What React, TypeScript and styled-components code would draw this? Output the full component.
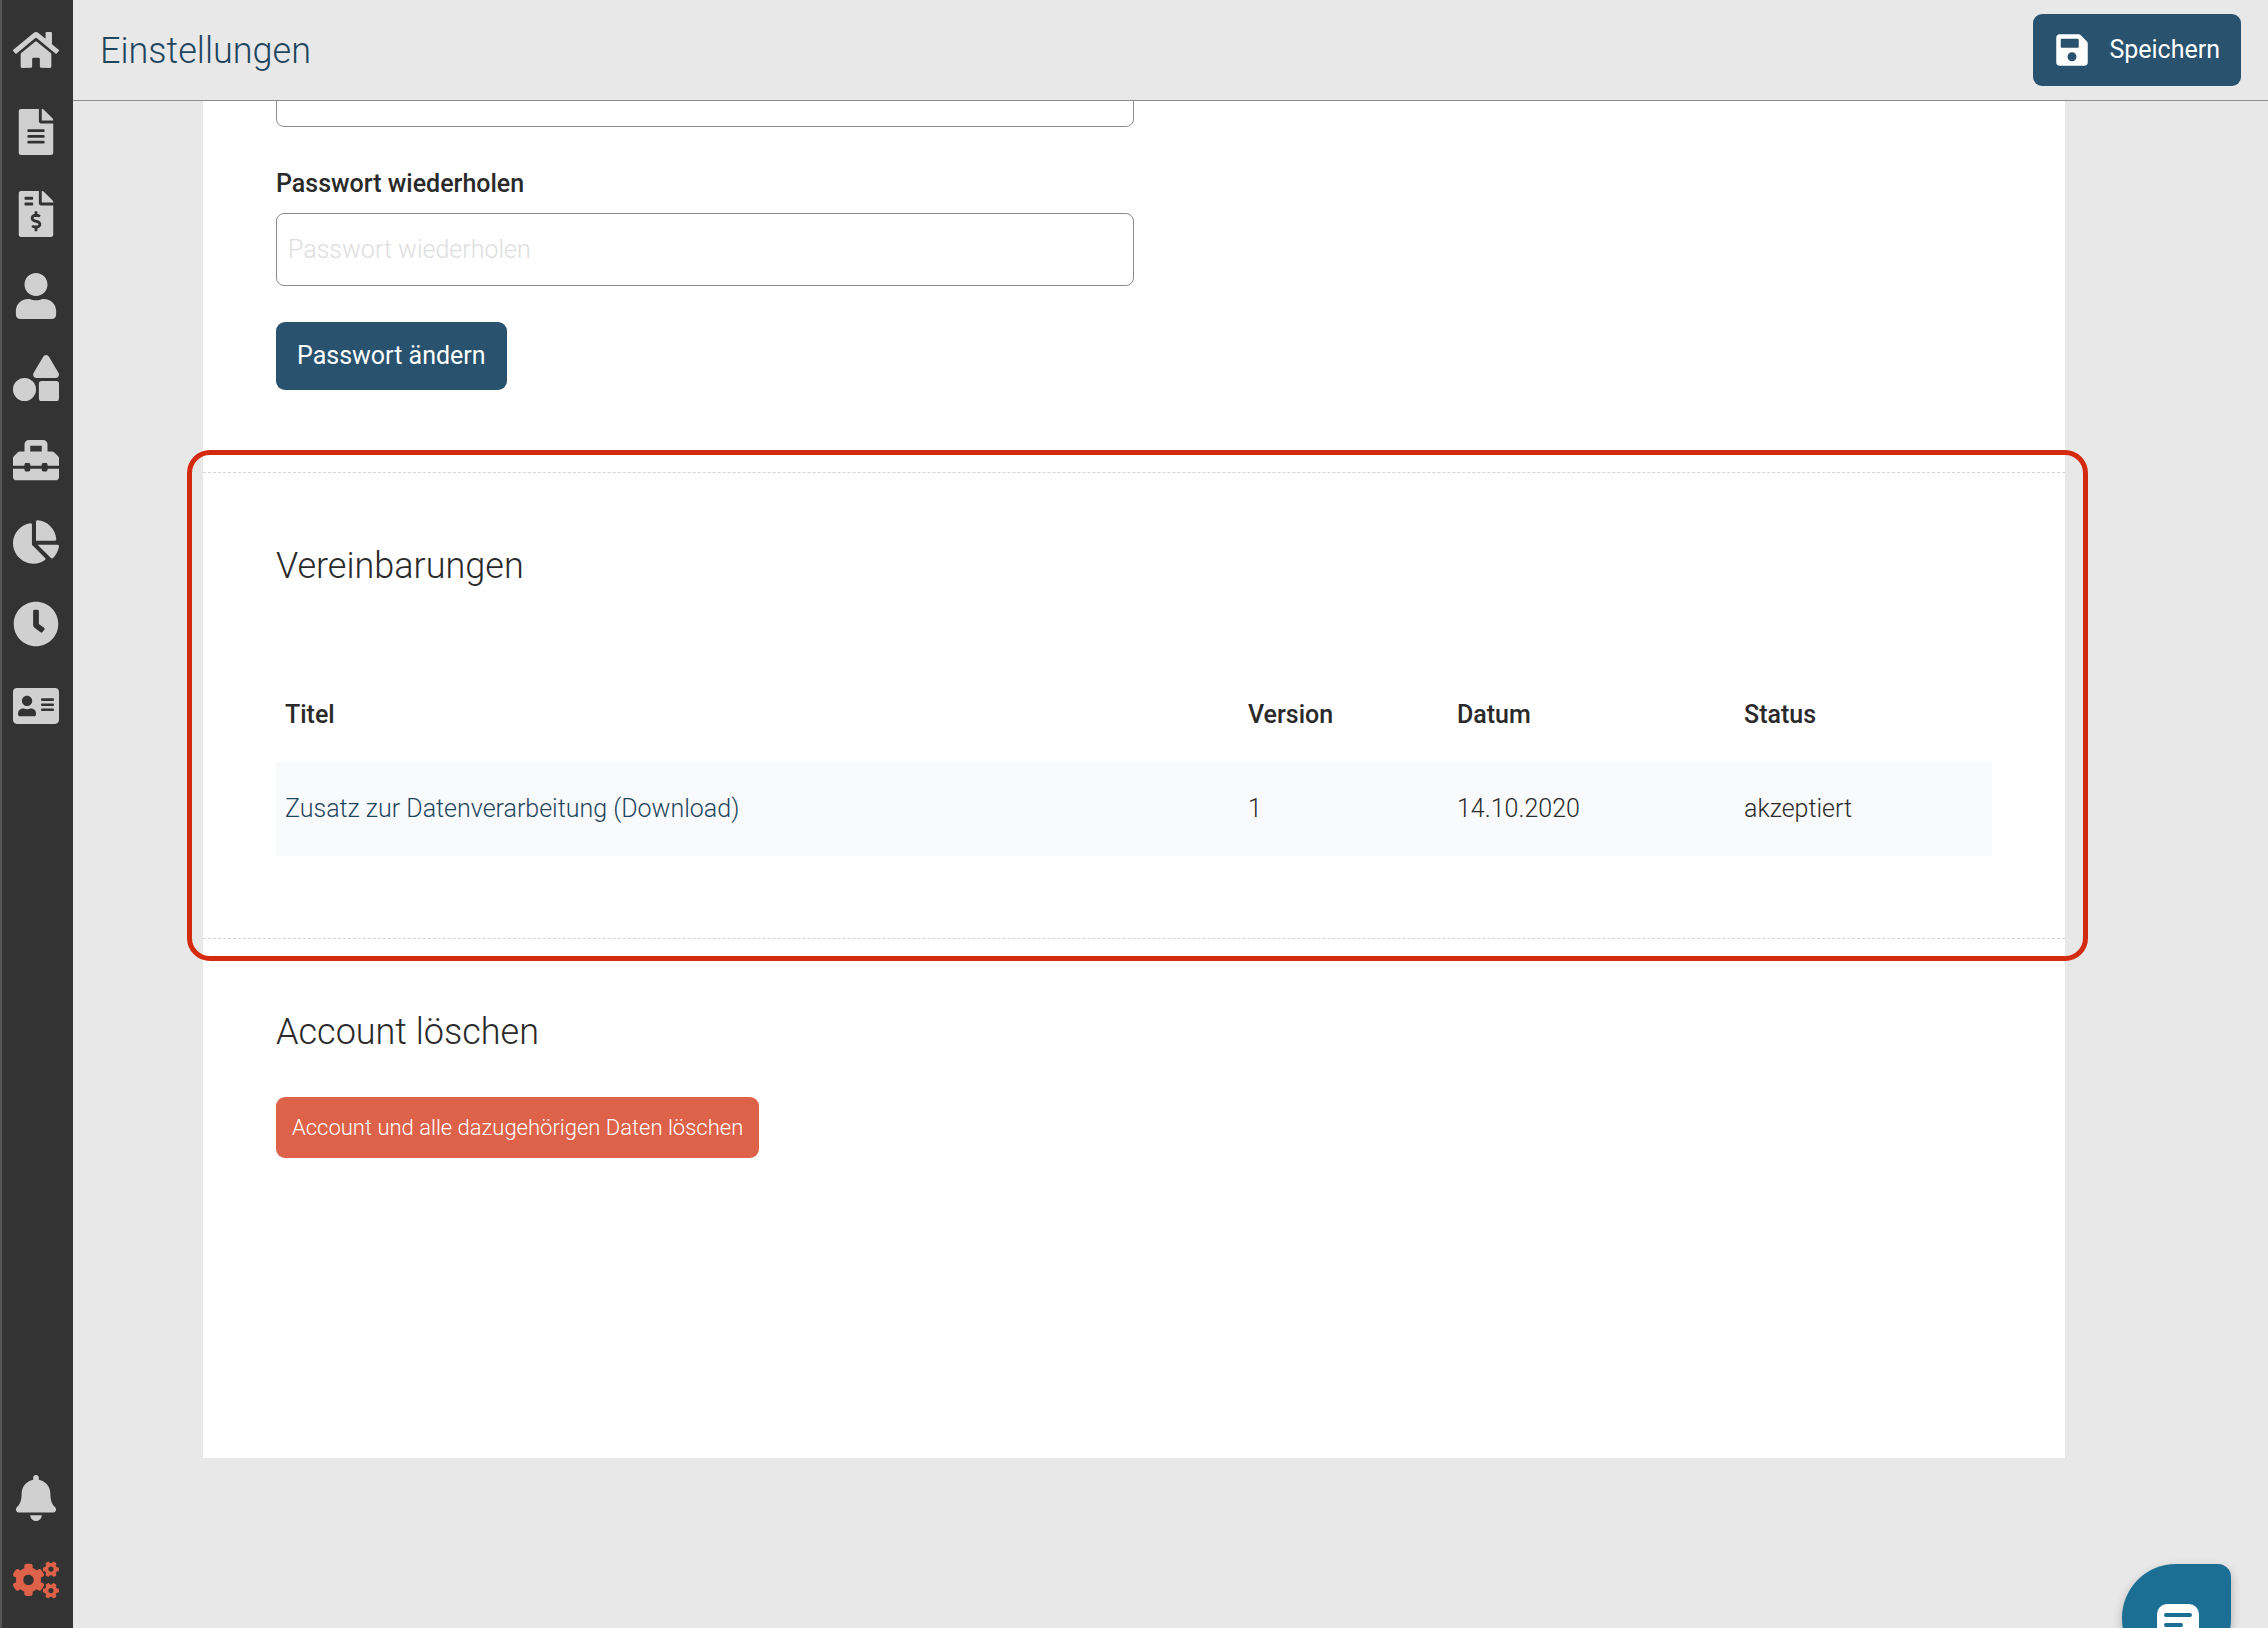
import React from "react";
import styled, { createGlobalStyle, css } from "styled-components";
import {
  FaAddressCard,
  FaBell,
  FaChartPie,
  FaClock,
  FaCogs,
  FaFileAlt,
  FaFileInvoiceDollar,
  FaHome,
  FaSave,
  FaShapes,
  FaToolbox,
  FaUser,
} from "react-icons/fa";

const color = {
  page: "#e8e8e8",
  sidebar: "#333333",
  icon: "#d0d0d0",
  text: "#2a2a2a",
  primary: "#28526d",
  link: "#1f465f",
  danger: "#dd6249",
  line: "#8c8c8c",
  highlight: "#d42a10",
  chat: "#1b6f95",
};

const GlobalStyle = createGlobalStyle`
  *, *::before, *::after { box-sizing: border-box; }
  body {
    margin: 0;
    background: ${color.page};
    color: ${color.text};
    font-family: Roboto, "Liberation Sans", sans-serif;
    font-size: 25px;
    font-weight: 300;
    line-height: 32px;
  }
`;

const Shell = styled.div`
  display: flex;
  height: 100vh;
`;

const Sidebar = styled.nav`
  flex: none;
  display: flex;
  flex-direction: column;
  justify-content: space-between;
  width: 73px;
  padding: 9px 3px 7px 0;
  background: ${color.sidebar};
  border-left: 2px solid #555555;
`;

const NavGroup = styled.div`
  display: flex;
  flex-direction: column;
`;

const NavLink = styled.a<{ $active?: boolean }>`
  display: flex;
  align-items: center;
  justify-content: center;
  height: 82px;
  color: ${(p) => (p.$active ? color.danger : color.icon)};

  svg {
    width: 46px;
    height: 46px;
  }
`;

const Content = styled.div`
  flex: 1;
  min-width: 0;
  display: flex;
  flex-direction: column;
`;

const Header = styled.header`
  flex: none;
  display: flex;
  align-items: center;
  justify-content: space-between;
  height: 101px;
  padding: 0 27px;
  border-bottom: 1px solid ${color.line};
`;

const PageTitle = styled.h1`
  margin: 0;
  padding-top: 2px;
  color: ${color.link};
  font-size: 36px;
  font-weight: 300;
  line-height: 42px;
`;

const Heading = styled.h2`
  margin: 0;
  font-size: 36px;
  font-weight: 300;
  line-height: 42px;
`;

const Button = styled.button<{ $kind?: "save" | "danger" }>`
  display: inline-flex;
  align-items: center;
  gap: 19px;
  height: 68px;
  padding: 0 21px;
  border: 0;
  border-radius: 9px;
  background: ${color.primary};
  color: #ffffff;
  font: inherit;
  font-weight: 400;
  cursor: pointer;

  ${(p) =>
    p.$kind === "save" &&
    css`
      height: 72px;

      svg {
        width: 36px;
        height: 36px;
      }
    `}

  ${(p) =>
    p.$kind === "danger" &&
    css`
      height: 61px;
      padding: 0 16px;
      background: ${color.danger};
      font-size: 22px;
      font-weight: 300;
    `}
`;

const Main = styled.main`
  flex: 1;
  min-height: 0;
  overflow: hidden;
  padding: 0 203px 0 130px;
`;

const Card = styled.div`
  margin-top: -47px;
  padding-bottom: 300px;
  background: #ffffff;
`;

const PasswordForm = styled.form`
  display: flex;
  flex-direction: column;
  align-items: flex-start;
  padding: 0 73px 82px;
`;

const Label = styled.label`
  margin: 41px 0 13px;
  font-weight: 500;
`;

const Input = styled.input`
  width: 50%;
  height: 73px;
  padding: 0 11px;
  border: 1px solid ${color.line};
  border-radius: 8px;
  background: #ffffff;
  color: ${color.text};
  font: inherit;

  &::placeholder {
    color: #dedede;
    opacity: 1;
  }
`;

const FormActions = styled.div`
  display: flex;
  margin-top: 36px;
`;

const Agreements = styled.section`
  position: relative;
  padding: 72px 73px 82px;
  border-top: 1px dashed #d4d4d4;
  border-bottom: 1px dashed #d4d4d4;
`;

const HighlightFrame = styled.div`
  position: absolute;
  inset: -23px -23px -23px -16px;
  border: 5px solid ${color.highlight};
  border-radius: 23px;
  pointer-events: none;
`;

const Table = styled.table`
  width: 100%;
  margin-top: 81px;
  border-collapse: collapse;
  table-layout: fixed;
`;

const HeadCell = styled.th<{ $width?: number }>`
  width: ${(p) => (p.$width ? `${p.$width}px` : "auto")};
  height: 94px;
  padding: 0 9px;
  font-weight: 500;
  text-align: left;
`;

const Cell = styled.td`
  height: 94px;
  padding: 0 9px;
  background: #f9fafc;
`;

const DocumentLink = styled.a`
  color: ${color.link};
  text-decoration: none;
`;

const DeleteSection = styled.section`
  display: flex;
  flex-direction: column;
  align-items: flex-start;
  gap: 44px;
  padding: 72px 73px 0;
`;

const ChatButton = styled.button`
  position: fixed;
  right: 37px;
  bottom: -45px;
  display: flex;
  align-items: flex-start;
  justify-content: center;
  width: 109px;
  height: 109px;
  padding: 40px 0 0 2px;
  border: 0;
  border-radius: 54px 13px 54px 54px;
  background: ${color.chat};
  box-shadow: 0 4px 10px rgba(0, 0, 0, 0.25);
  cursor: pointer;
`;

const ChatIcon = () => (
  <svg width="42" height="42" viewBox="0 0 42 42" aria-hidden="true">
    <path
      d="M10 0H32A10 10 0 0 1 42 10V40L32 34H10A10 10 0 0 1 0 24V10A10 10 0 0 1 10 0Z"
      fill="#ffffff"
    />
    <path d="M9 11H33M9 21H24" stroke={color.chat} strokeWidth="4" strokeLinecap="round" />
  </svg>
);

const mainNav = [
  { name: "Startseite", Icon: FaHome },
  { name: "Dokumente", Icon: FaFileAlt },
  { name: "Rechnungen", Icon: FaFileInvoiceDollar },
  { name: "Kunden", Icon: FaUser },
  { name: "Artikel", Icon: FaShapes },
  { name: "Werkzeuge", Icon: FaToolbox },
  { name: "Auswertungen", Icon: FaChartPie },
  { name: "Zeiterfassung", Icon: FaClock },
  { name: "Kontakte", Icon: FaAddressCard },
];

const agreements = [
  {
    title: "Zusatz zur Datenverarbeitung (Download)",
    version: "1",
    date: "14.10.2020",
    status: "akzeptiert",
  },
];

export default function App() {
  return (
    <>
      <GlobalStyle />
      <Shell>
        <Sidebar>
          <NavGroup>
            {mainNav.map(({ name, Icon }) => (
              <NavLink key={name} href="#" aria-label={name}>
                <Icon />
              </NavLink>
            ))}
          </NavGroup>
          <NavGroup>
            <NavLink href="#" aria-label="Benachrichtigungen">
              <FaBell />
            </NavLink>
            <NavLink href="#" aria-label="Einstellungen" $active>
              <FaCogs />
            </NavLink>
          </NavGroup>
        </Sidebar>
        <Content>
          <Header>
            <PageTitle>Einstellungen</PageTitle>
            <Button type="button" $kind="save">
              <FaSave />
              Speichern
            </Button>
          </Header>
          <Main>
            <Card>
              <PasswordForm>
                <Input type="password" aria-label="Neues Passwort" />
                <Label htmlFor="password-repeat">Passwort wiederholen</Label>
                <Input
                  id="password-repeat"
                  type="password"
                  placeholder="Passwort wiederholen"
                />
                <FormActions>
                  <Button type="button">Passwort ändern</Button>
                </FormActions>
              </PasswordForm>
              <Agreements>
                <Heading>Vereinbarungen</Heading>
                <Table>
                  <thead>
                    <tr>
                      <HeadCell>Titel</HeadCell>
                      <HeadCell $width={209}>Version</HeadCell>
                      <HeadCell $width={287}>Datum</HeadCell>
                      <HeadCell $width={257}>Status</HeadCell>
                    </tr>
                  </thead>
                  <tbody>
                    {agreements.map((a) => (
                      <tr key={a.title}>
                        <Cell>
                          <DocumentLink href="#">{a.title}</DocumentLink>
                        </Cell>
                        <Cell>{a.version}</Cell>
                        <Cell>{a.date}</Cell>
                        <Cell>{a.status}</Cell>
                      </tr>
                    ))}
                  </tbody>
                </Table>
                <HighlightFrame />
              </Agreements>
              <DeleteSection>
                <Heading>Account löschen</Heading>
                <Button type="button" $kind="danger">
                  Account und alle dazugehörigen Daten löschen
                </Button>
              </DeleteSection>
            </Card>
          </Main>
        </Content>
      </Shell>
      <ChatButton type="button" aria-label="Chat öffnen">
        <ChatIcon />
      </ChatButton>
    </>
  );
}
